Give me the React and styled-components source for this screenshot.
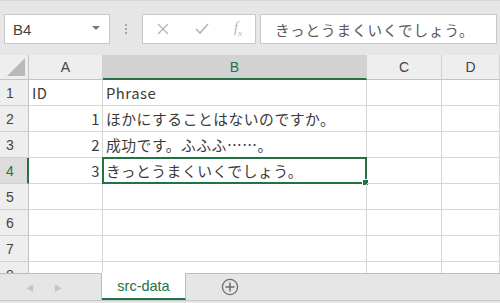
import React from "react"
import styled, { createGlobalStyle } from "styled-components"

const GlobalStyle = createGlobalStyle`
  html, body {
    margin: 0;
    padding: 0;
    width: 500px;
    height: 303px;
    overflow: hidden;
    background: #e6e6e6;
  }
  body {
    font-family: "Noto Sans CJK JP", "Noto Sans", sans-serif;
  }
`

const COLS = [29, 74, 264, 75, 58]
const ROW_H = 26
const GREEN = "#217346"

const rows = [
  ["ID", "Phrase"],
  [1, "ほかにすることはないのですか。"],
  [2, "成功です。ふふふ……。"],
  [3, "きっとうまくいくでしょう。"],
  ["", ""],
  ["", ""],
  ["", ""],
  ["", ""],
]

const App = () => {
  return (
    <Frame>
      <GlobalStyle />
      <Toolbar>
        <NameBox>
          <span>B4</span>
          <Caret />
        </NameBox>
        <Grip>
          <i />
          <i />
          <i />
        </Grip>
        <FxButtons>
          <svg width="12" height="12" viewBox="0 0 12 12">
            <path d="M1 1 L11 11 M11 1 L1 11" stroke="#b4b4b4" strokeWidth="1.4" />
          </svg>
          <svg width="14" height="12" viewBox="0 0 14 12">
            <path d="M1 6 L5 10 L13 1" stroke="#b4b4b4" strokeWidth="1.6" fill="none" />
          </svg>
          <FxLabel>
            f<sub>x</sub>
          </FxLabel>
        </FxButtons>
        <FormulaInput>きっとうまくいくでしょう。</FormulaInput>
      </Toolbar>

      <Sheet>
        <HeaderRow>
          <Corner>
            <svg width="18" height="18" viewBox="0 0 18 18">
              <path d="M18 0 L18 18 L0 18 Z" fill="#b9b9b9" />
            </svg>
          </Corner>
          {["A", "B", "C", "D"].map((c, i) => (
            <ColHead key={c} $w={COLS[i + 1]} $active={c === "B"}>
              {c}
            </ColHead>
          ))}
        </HeaderRow>
        {rows.map((r, i) => (
          <Row key={i}>
            <RowHead $active={i === 3}>{i + 1}</RowHead>
            <Cell $w={COLS[1]} $right={typeof r[0] === "number"}>
              {r[0]}
            </Cell>
            <Cell $w={COLS[2]}>
              {r[1]}
              {i === 3 && <Selection />}
            </Cell>
            <Cell $w={COLS[3]} />
            <Cell $w={COLS[4]} />
          </Row>
        ))}
      </Sheet>

      <TabBar>
        <Arrows>
          <span>◀</span>
          <span>▶</span>
        </Arrows>
        <Tab>src-data</Tab>
        <AddSheet>
          <svg width="18" height="18" viewBox="0 0 18 18">
            <circle cx="9" cy="9" r="7.6" stroke="#6d6d6d" strokeWidth="1.3" fill="none" />
            <path d="M9 4.5 V13.5 M4.5 9 H13.5" stroke="#6d6d6d" strokeWidth="1.5" />
          </svg>
        </AddSheet>
      </TabBar>
    </Frame>
  )
}

export default App

const Frame = styled.div`
  width: 500px;
  height: 303px;
  display: flex;
  flex-direction: column;
  background: #e6e6e6;
  overflow: hidden;
`

const Toolbar = styled.div`
  height: 55px;
  box-sizing: border-box;
  padding: 13px 0 11px 4px;
  display: flex;
  align-items: stretch;
  border-top: 1px solid #d8d8d8;
`

const NameBox = styled.div`
  width: 106px;
  box-sizing: border-box;
  background: #fff;
  border: 1px solid #c8c8c8;
  display: flex;
  align-items: center;
  justify-content: space-between;
  padding: 0 9px 0 8px;
  font-family: "Liberation Sans", sans-serif;
  font-size: 15px;
  color: #444;
`

const Caret = styled.div`
  width: 0;
  height: 0;
  border-left: 4px solid transparent;
  border-right: 4px solid transparent;
  border-top: 4px solid #777;
  margin-top: -3px;
`

const Grip = styled.div`
  width: 32px;
  display: flex;
  flex-direction: column;
  align-items: center;
  justify-content: center;
  gap: 2px;

  i {
    width: 2px;
    height: 2px;
    background: #a5a5a5;
  }
`

const FxButtons = styled.div`
  width: 114px;
  box-sizing: border-box;
  background: #fff;
  border: 1px solid #c8c8c8;
  display: flex;
  align-items: center;
  justify-content: space-between;
  padding: 0 13px 0 14px;
`

const FxLabel = styled.span`
  font-family: "Liberation Serif", serif;
  font-style: italic;
  font-size: 14px;
  color: #b4b4b4;

  sub {
    font-size: 9px;
  }
`

const FormulaInput = styled.div`
  flex: 1;
  margin-left: 4px;
  margin-right: 3px;
  background: #fff;
  border: 1px solid #c8c8c8;
  display: flex;
  align-items: center;
  padding-left: 14px;
  font-size: 14.6px;
  letter-spacing: 0.9px;
  color: #5a5a5a;
  white-space: nowrap;
`

const Sheet = styled.div`
  height: 218px;
  background: #fff;
  overflow: hidden;
  flex-shrink: 0;
`

const HeaderRow = styled.div`
  display: flex;
  height: 25px;
  background: #eeeeee;
  border-bottom: 1px solid #c4c4c4;
  box-sizing: border-box;
`

const Corner = styled.div`
  width: ${COLS[0]}px;
  box-sizing: border-box;
  border-right: 1px solid #c4c4c4;
  display: flex;
  align-items: flex-end;
  justify-content: flex-end;
  padding: 0 3px 3px 0;
`

const ColHead = styled.div`
  width: ${p => p.$w}px;
  flex-shrink: 0;
  box-sizing: border-box;
  border-right: 1px solid #d0d0d0;
  display: flex;
  align-items: center;
  justify-content: center;
  font-family: "Liberation Sans", sans-serif;
  font-size: 14px;
  color: ${p => (p.$active ? GREEN : "#444")};
  background: ${p => (p.$active ? "#d2d2d2" : "transparent")};
  border-bottom: ${p => (p.$active ? `2px solid ${GREEN}` : "none")};
  margin-bottom: ${p => (p.$active ? "-1px" : "0")};
`

const Row = styled.div`
  display: flex;
  height: ${ROW_H}px;
  flex-shrink: 0;
`

const RowHead = styled.div`
  width: ${COLS[0]}px;
  flex-shrink: 0;
  box-sizing: border-box;
  background: ${p => (p.$active ? "#dcdcdc" : "#eeeeee")};
  border-right: ${p => (p.$active ? `2px solid ${GREEN}` : "1px solid #c4c4c4")};
  border-bottom: 1px solid #d0d0d0;
  padding-left: 6px;
  display: flex;
  align-items: center;
  font-family: "Liberation Sans", sans-serif;
  font-size: 14px;
  color: ${p => (p.$active ? GREEN : "#444")};
`

const Cell = styled.div`
  position: relative;
  width: ${p => p.$w}px;
  flex-shrink: 0;
  box-sizing: border-box;
  border-right: 1px solid #d6d6d6;
  border-bottom: 1px solid #d6d6d6;
  display: flex;
  align-items: center;
  justify-content: ${p => (p.$right ? "flex-end" : "flex-start")};
  padding: 0 2px 0 3px;
  font-size: 14.8px;
  letter-spacing: 0.5px;
  color: #3a3a3a;
  white-space: nowrap;
`

const Selection = styled.div`
  position: absolute;
  left: -1px;
  top: -1px;
  right: -1px;
  bottom: -1px;
  border: 2px solid ${GREEN};
  pointer-events: none;

  &::after {
    content: "";
    position: absolute;
    right: -4px;
    bottom: -4px;
    width: 5px;
    height: 5px;
    background: ${GREEN};
    border: 1px solid #fff;
  }
`

const TabBar = styled.div`
  height: 26px;
  flex-shrink: 0;
  display: flex;
  align-items: stretch;
  border-top: 1px solid #bdbdbd;
  border-bottom: 1px solid #c8c8c8;
  background: #e6e6e6;
`

const Arrows = styled.div`
  width: 102px;
  display: flex;
  align-items: center;
  gap: 20px;
  padding-left: 26px;
  box-sizing: border-box;
  font-size: 8px;
  color: #c4c4c4;
  border-right: 1px solid #bdbdbd;
`

const Tab = styled.div`
  width: 84px;
  margin-top: -1px;
  box-sizing: border-box;
  background: #fff;
  border-right: 1px solid #bdbdbd;
  border-bottom: 2px solid ${GREEN};
  display: flex;
  align-items: center;
  justify-content: center;
  font-family: "Liberation Sans", sans-serif;
  font-size: 14.5px;
  color: ${GREEN};
`

const AddSheet = styled.div`
  width: 88px;
  display: flex;
  align-items: center;
  justify-content: center;
`
